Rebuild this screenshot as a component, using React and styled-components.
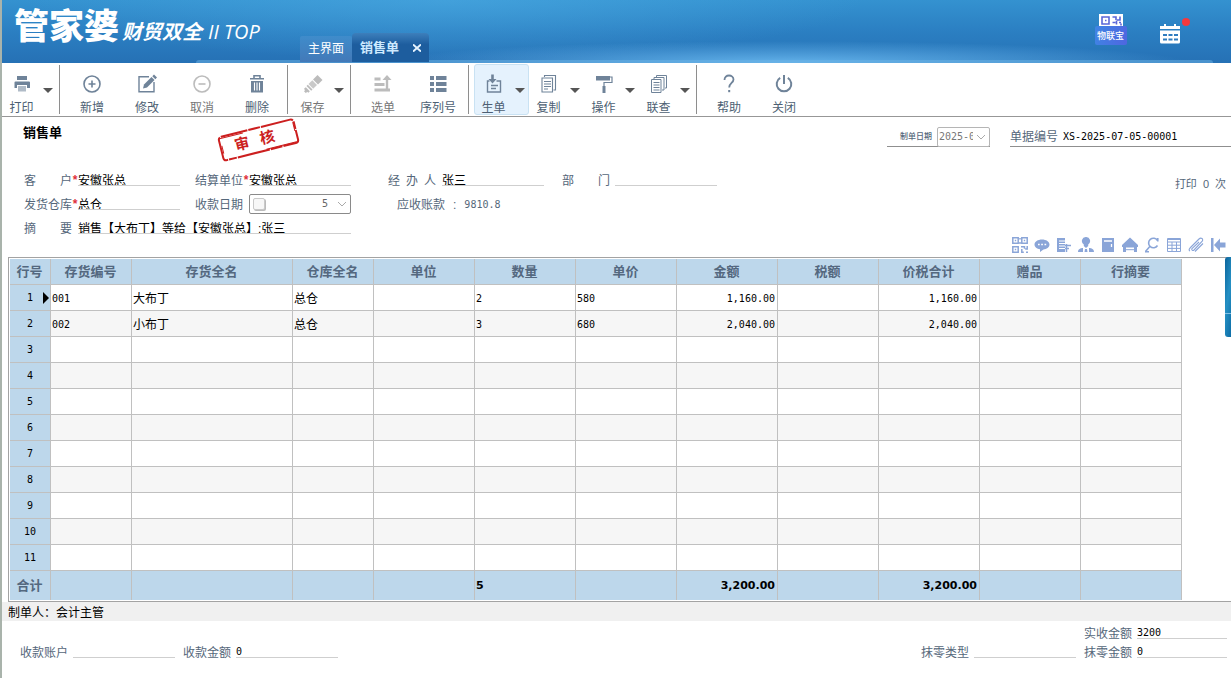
import React from "react";
import styled, { createGlobalStyle, css } from "styled-components";

const CJK = `"Liberation Sans", "Noto Sans CJK SC", sans-serif`;
const MONO = `"DejaVu Sans Mono", "Noto Sans CJK SC", monospace`;

const GlobalStyle = createGlobalStyle`
  * {
    box-sizing: border-box;
  }
  body {
    margin: 0;
    background: #fff;
    font-family: ${CJK};
    font-size: 12px;
    line-height: 16px;
    color: #000;
  }
  button, input, select {
    font: inherit;
    color: inherit;
    margin: 0;
    padding: 0;
    border: 0;
    background: none;
    border-radius: 0;
    outline: none;
  }
`;

const Page = styled.div`
  display: flex;
  flex-direction: column;
  min-height: 100vh;
  border-left: 2px solid #a9b3ab;
  overflow: hidden;
`;

// --- Title bar ---

const TopBar = styled.header`
  position: relative;
  display: flex;
  align-items: flex-end;
  height: 63px;
  background:
    radial-gradient(ellipse 400px 22px at 64% 100%, rgba(105, 185, 240, 0.9), transparent),
    radial-gradient(ellipse 420px 60px at 36% 0, rgba(80, 175, 230, 0.5), transparent),
    linear-gradient(#3492d0, #2b7fc2 50%, #2671b5);
`;

const Shine = styled.div`
  position: absolute;
  left: 194px;
  right: 18px;
  bottom: 0;
  height: 3px;
  background: rgba(110, 180, 230, 0.5);
  border-radius: 12px 12px 0 0;
`;

const Brand = styled.div`
  display: flex;
  align-items: baseline;
  align-self: flex-start;
  width: 298px;
  padding: 3px 0 0 12px;
  color: #fff;
  line-height: 48px;
  white-space: nowrap;
`;

const BrandName = styled.span`
  font-size: 35px;
  font-weight: 900;
`;

const BrandSub = styled.span`
  margin-left: 3px;
  font-size: 20px;
  font-weight: 700;
  font-style: italic;
`;

const BrandEdition = styled.span`
  margin-left: 6px;
  font-family: "Open Sans", sans-serif;
  font-size: 20px;
  font-style: italic;
`;

const Tabs = styled.nav`
  position: relative;
  display: flex;
  align-items: flex-end;
  height: 100%;
  padding-bottom: 1px;
`;

const Tab = styled.button`
  display: flex;
  align-items: center;
  gap: 14px;
  height: 26px;
  padding: 0 8px;
  border-radius: 2px 2px 0 0;
  background: linear-gradient(#3f8ccb, #4379b8);
  color: #fff;
  ${(p) =>
    p.$active &&
    css`
      height: 29px;
      border-radius: 4px 4px 0 0;
      background: linear-gradient(#3d7fbb, #1d5d9e 40%);
      color: #cdeaff;
      font-size: 13px;
      font-weight: 700;
    `}
`;

const TopActions = styled.div`
  display: flex;
  align-items: flex-start;
  gap: 32px;
  align-self: flex-start;
  margin-left: auto;
  padding: 14px 40px 0 0;
`;

const IotButton = styled.button`
  display: flex;
  flex-direction: column;
  align-items: center;
  width: 33px;
  color: #fff;
`;

const IotLabel = styled.span`
  width: 32px;
  height: 19px;
  border-radius: 2px;
  background: linear-gradient(100deg, #3f84e4, #4f66e0);
  font-size: 9px;
  font-weight: 500;
  line-height: 20px;
  text-align: center;
`;

// --- Toolbar ---

const Toolbar = styled.div`
  display: flex;
  height: 54px;
  padding: 1px 0;
  border-bottom: 1px solid #979797;
`;

const ToolButton = styled.button`
  display: grid;
  grid-template-columns: ${(p) => (p.$menu ? "38px 14px" : "1fr")};
  align-items: center;
  width: 55px;
  border: 1px solid ${(p) => (p.$active ? "#c9e2f3" : "transparent")};
  border-radius: 3px;
  background: ${(p) => (p.$active ? "#e5f2fd" : "none")};
  color: ${(p) => (p.disabled ? "#777" : "#4d5f73")};
`;

const ToolFace = styled.span`
  display: flex;
  flex-direction: column;
  align-items: center;
  gap: 5px;
  padding: 8px 1px 0 0;
  white-space: nowrap;

  svg {
    color: ${(p) => (p.$disabled ? "#bcbcbc" : "#6f8399")};
  }
`;

const Caret = styled.span`
  justify-self: center;
  border: 5px solid transparent;
  border-top-color: #555;
  border-bottom: 0;
`;

const Divider = styled.span`
  width: 1px;
  margin: 1px 5px 1px 2px;
  background: #8e8e8e;
`;

// --- Document head ---

const DocHead = styled.div`
  display: flex;
  align-items: flex-start;
  height: 51px;
`;

const DocTitle = styled.h1`
  width: 214px;
  margin: 0;
  padding: 8px 0 0 21px;
  font-size: 13px;
  line-height: 16px;
`;

const DocMeta = styled.div`
  display: flex;
  gap: 20px;
  margin-left: auto;
  padding-top: 10px;
`;

const MetaField = styled.label`
  display: flex;
  align-items: center;
  height: 20px;
  border-bottom: 1px solid #8f8f8f;
  color: #55677a;
`;

const TinyLabel = styled.span`
  width: 50px;
  padding-right: 5px;
  font-size: 8px;
  font-weight: 500;
  text-align: right;
`;

const DateBox = styled.span`
  display: flex;
  align-items: center;
  width: 53px;
  height: 20px;
  padding-left: 1px;
  border: 1px solid #b5b5b5;
  border-radius: 2px;
  background: #fff;
`;

const DateInput = styled.input`
  width: 34px;
  height: 16px;
  font-family: ${MONO};
  font-size: 10px;
  color: #777;
`;

const CodeInput = styled.input`
  width: 168px;
  height: 16px;
  margin-left: 5px;
  font-family: ${MONO};
  font-size: 10px;
  color: #000;
`;

const FormArea = styled.div`
  display: flex;
  justify-content: space-between;
  height: 89px;
`;

const Fields = styled.div`
  display: grid;
  grid-template-columns: 171px 193px 174px 155px;
  grid-template-rows: repeat(3, 24px);
  padding-left: 22px;
`;

const Field = styled.label`
  display: flex;
  align-items: center;
  grid-column: span ${(p) => p.$span || 1};
  color: #55677a;
  white-space: nowrap;
`;

const FieldName = styled.span`
  width: 48px;
  padding-top: 2px;
  text-align-last: justify;
`;

const Mark = styled.span`
  width: 6px;
  color: #e0303a;
  font-weight: 700;
  text-align: center;
`;

const LineInput = styled.input`
  width: ${(p) => p.$width || 102}px;
  height: 12px;
  border-bottom: 1px solid #cfcfcf;
  font-family: ${(p) => (p.$num ? MONO : CJK)};
  font-size: ${(p) => (p.$num ? 10 : 12)}px;
  line-height: 11px;
  color: #000;
`;

const TermBox = styled.span`
  display: flex;
  align-items: center;
  width: 102px;
  height: 20px;
  margin-left: 6px;
  padding-left: 3px;
  border: 1px solid #8a8a8a;
  border-radius: 2px;
  background: #fff;
`;

const TermCheck = styled.input`
  appearance: none;
  width: 12px;
  height: 12px;
  border: 1px solid #c9c9c9;
  border-radius: 2px;
  background: #f7f7f7;
  box-shadow: 1px 1px 0 #bbb;
`;

const TermInput = styled.input`
  flex: 1;
  min-width: 0;
  height: 16px;
  padding-right: 6px;
  font-family: ${MONO};
  font-size: 10px;
  color: #666;
  text-align: right;
`;

const DropButton = styled.button`
  display: flex;
  justify-content: center;
  width: 16px;
`;

const Receivable = styled.output`
  display: flex;
  align-items: center;
  gap: 8px;
  padding: 2px 0 0 9px;
  color: #55677a;
`;

const Num = styled.span`
  font-family: ${MONO};
  font-size: 10px;
`;

const FormSide = styled.div`
  display: flex;
  flex-direction: column;
  justify-content: space-between;
  align-items: flex-end;
  padding: 8px 5px 4px 0;
`;

const PrintCount = styled.span`
  display: flex;
  gap: 6px;
  color: #55677a;
  font-size: 11px;
`;

const IconRow = styled.div`
  display: flex;
  gap: 6px;
  color: #8aa5d8;
`;

const IconButton = styled.button`
  display: flex;
  width: 16px;
  height: 16px;
`;

// --- Grid ---

const GridFrame = styled.div`
  position: relative;
  margin-left: 6px;
  padding: 1px 0 1px 1px;
  border: 1px solid #a3a3a3;
  border-right: 0;
`;

const Sheet = styled.table`
  width: 1172px;
  table-layout: fixed;
  border-collapse: separate;
  border-spacing: 0;

  th, td {
    height: 26px;
    padding: 0 2px 0 1px;
    border-right: 1px solid #c0c0c0;
    border-bottom: 1px solid #c0c0c0;
    overflow: hidden;
    white-space: nowrap;
  }

  thead th, tfoot th, tfoot td {
    background: #bdd7eb;
    color: #54687f;
    font-size: 13px;
    font-weight: 700;
  }

  tbody td {
    padding-top: 2px;
  }

  tbody th {
    padding: 1px 0 0;
    background: #bdd7eb;
    font-weight: 400;
  }

  tbody tr:nth-child(even) td {
    background: #f6f6f6;
  }

  tfoot th, tfoot td {
    height: 29px;
    border-bottom: 0;
  }
`;

const Cell = styled.td`
  text-align: ${(p) => (p.$right ? "right" : "left")};
  font-family: ${(p) => (p.$num ? MONO : CJK)};
  font-size: ${(p) => (p.$num ? 10 : 12)}px;
`;

const TotalCell = styled.td`
  ${Sheet} tfoot & {
    color: #000;
    font-family: "DejaVu Sans", sans-serif;
    font-size: 11px;
    text-align: ${(p) => (p.$right ? "right" : "left")};
  }
`;

const RowHead = styled.div`
  display: grid;
  grid-template-columns: 1fr 16px 1fr;
  align-items: center;
  font-family: ${MONO};
  font-size: 10px;
`;

const Pointer = styled.span`
  justify-self: end;
  margin-right: 1px;
  border: 6px solid transparent;
  border-left-color: #000;
  border-right: 0;
`;

const SideTab = styled.button`
  position: absolute;
  top: -1px;
  right: 0;
  width: 6px;
  height: 80px;
  border-radius: 3px 0 0 3px;
  background:
    linear-gradient(#7fc0e6, #7fc0e6) 0 56px / 100% 1px no-repeat,
    linear-gradient(100deg, #0b649c, #2590c4 50%, #0d6da6);
`;

// --- Footer ---

const StatusBar = styled.div`
  height: 19px;
  padding: 3px 6px 0;
  background: #f0f0f0;
  line-height: 16px;
`;

const Footer = styled.footer`
  display: flex;
  align-items: flex-end;
  gap: 8px;
  padding: 2px 4px 0 18px;
`;

const FootField = styled.label`
  display: flex;
  align-items: center;
  gap: 5px;
  height: 19px;
  color: #55677a;
  white-space: nowrap;
`;

const FootName = styled.span`
  padding-top: 2px;
`;

const FootRight = styled.div`
  display: flex;
  align-items: flex-end;
  gap: 8px;
  margin-left: auto;
`;

// --- Icons ---

function Svg({ size = 22, box = 22, children }) {
  return (
    <svg
      width={size}
      height={size}
      viewBox={`0 0 ${box} ${box}`}
      fill="none"
      stroke="currentColor"
      strokeWidth="1.6"
      aria-hidden="true"
    >
      {children}
    </svg>
  );
}

const icons = {
  print: (
    <Svg>
      <g fill="currentColor" stroke="none">
        <path d="M6 3h10v4H6zM4 8.500h14a1 1 0 0 1 1 1V15h-3v-3H6v3H3.500V9.500a1 1 0 0 1 1-1z" />
        <path d="M7 13h8v5.500H7z" opacity="0.55" />
      </g>
    </Svg>
  ),
  add: (
    <Svg>
      <circle cx="11" cy="11" r="8" />
      <path d="M11 7.500v7M7.500 11h7" />
    </Svg>
  ),
  edit: (
    <Svg>
      <path d="M13 3.800H3v15h15V9" strokeWidth="1.400" />
      <path d="M7 15.500l1-4 7.500-7.500 3 3-7.500 7.500z" fill="currentColor" stroke="none" />
      <path d="M16.300 3.200l1.700-1.700 3 3-1.700 1.700z" fill="currentColor" stroke="none" />
    </Svg>
  ),
  cancel: (
    <Svg>
      <circle cx="11" cy="11" r="8" />
      <path d="M7.500 11h7" />
    </Svg>
  ),
  remove: (
    <Svg>
      <path d="M4 5.800h14M8 5.500V2.800h6v2.700" />
      <path d="M5 8h12v11.500H5z" fill="currentColor" stroke="none" />
      <path d="M8.500 9.500v8M11 9.500v8M13.500 9.500v8" stroke="#fff" strokeWidth="1.100" />
    </Svg>
  ),
  save: (
    <Svg>
      <g fill="currentColor" stroke="none">
        <path d="M15.500 2l5 5-4.500 4.500-5-5z" />
        <path d="M10.300 7.300l4.700 4.700-3.800 3.800-4.700-4.700z" opacity="0.800" />
        <path d="M5.800 11.800l4.700 4.700-1.300 1.300-4.700-4.700zM3.800 14.200l4 4-1.300 1.500-1.500-1-1 1.500-2-2 1-1-1-1.500z" />
      </g>
    </Svg>
  ),
  pick: (
    <Svg>
      <path d="M2.500 6h6M2.500 11.500h10M2.500 17h15.500" strokeWidth="3" />
      <path d="M15 18V6" strokeWidth="2.400" />
      <path d="M10.500 7L15 2l4.500 5z" fill="currentColor" stroke="none" />
    </Svg>
  ),
  serial: (
    <Svg>
      <path d="M3 5h4M3 11h4M3 17h4M9 5h10.500M9 11h10.500M9 17h10.500" strokeWidth="4" />
    </Svg>
  ),
  create: (
    <Svg>
      <path d="M6.500 8H4.500v11h13V8H13.500M8 12.500h7M8 15.500h5" strokeWidth="1.400" />
      <path d="M9.500 1.500v6" strokeWidth="2.600" />
      <path d="M5.500 6h8L9.500 10.500z" fill="currentColor" stroke="none" />
    </Svg>
  ),
  copy: (
    <Svg>
      <path d="M6.500 4V2.500h11V17H15.500M4 5h10.500v14H4zM6 8.500h7M6 11h7M6 13.500h7M6 16h4" strokeWidth="1.100" />
    </Svg>
  ),
  operate: (
    <Svg>
      <path d="M3 3h14v4.500H3z" fill="currentColor" stroke="none" />
      <path d="M17 4h2v5.500h-8V13" strokeWidth="1.200" />
      <path d="M11 13v7" strokeWidth="3" />
    </Svg>
  ),
  trace: (
    <Svg>
      <path d="M8.500 4V2.500h10V15H17M6 6V4.500h10V17h-2M3.500 6.500H13v13H3.500zM5.500 9.500h6M5.500 12h6M5.500 14.500h6M5.500 17h6" strokeWidth="1" />
    </Svg>
  ),
  help: (
    <Svg>
      <path d="M6.500 7c0-3 2-4.500 4.500-4.500s4.500 1.700 4.500 4c0 3.500-4.300 3.500-4.300 8" strokeWidth="1.800" />
      <path d="M10.200 17h2v2.200h-2z" fill="currentColor" stroke="none" />
    </Svg>
  ),
  close: (
    <Svg>
      <path d="M7.200 4.800a7.300 7.300 0 1 0 7.600 0M11 2v9" strokeWidth="2" />
    </Svg>
  ),
};

const smallIcons = [
  ["二维码", <path d="M.800.800h5.400v5.400H.800zM9.800.800h5.400v5.400H9.800zM.800 9.800h5.400v5.400H.800zM2.800 3.500h1.400M11.800 3.500h1.400M2.800 12.500h1.400M9 9.800h3.500v2M15.200 9v3h-2M9.800 12v3.200h2M14 15.200h2M8 1v1.500M8 5v2" strokeWidth="1.500" />],
  ["消息", <g><path d="M8 2.500c4.200 0 7.500 2.200 7.500 5s-3 4.800-6 5L6 15v-2.700C3 12 .5 10 .5 7.500c0-2.800 3.300-5 7.500-5z" fill="currentColor" stroke="none" /><path d="M4 7.500h1.700M7.200 7.500h1.700M10.500 7.500h1.700" stroke="#fff" /></g>],
  ["单位", <g><path d="M1 1h8v14H1z" fill="currentColor" stroke="none" /><path d="M3 4h6M3 6.500h6M3 9h6M3 11.500h6" stroke="#fff" strokeWidth="1" /><path d="M9 8.500h6M9 11.500h4M10.500 7v8" strokeWidth="1.500" /></g>],
  ["人员", <path d="M8 0a4 4 0 0 1 2.200 7.400v1.600L8 11 5.800 9V7.400A4 4 0 0 1 8 0zM0 15c0-3 2.500-4 5-4v4zM16 15c0-3-2.500-4-5-4v4zM7 12h2l.500 3h-3z" fill="currentColor" stroke="none" />],
  ["仓库门", <g><path d="M2 1h12v14H2z" fill="currentColor" stroke="none" /><path d="M4 4h8M11.500 7v3" stroke="#fff" strokeWidth="1.300" /></g>],
  ["首页", <g><path d="M8 .5L16 8v2h-1v5H1v-5H0V8z" fill="currentColor" stroke="none" /><path d="M4 10.500h8v4.500H4z" fill="#fff" stroke="none" /><path d="M4 12.700h8" strokeWidth="1" /></g>],
  ["查找", <path d="M13.500 3.500A4.800 4.800 0 1 0 13.500 8.500M5.800 9.500L1.500 14.500M13.800 1v3.500M1 14.700h4" strokeWidth="1.600" />],
  ["计算器", <path d="M1.500 1.500h13v13h-13zM1.500 5h13M1.500 8.200h13M1.500 11.400h13M6 5v9.500M10.500 5v9.500M1.500 2.500h13" strokeWidth="1" />],
  ["附件", <path d="M2 14c-2-1 0-3 1-4L11 2c2-2 5 0 3 2.500L6 13c-1 1-3 0-2-1.500L11 5M7 14.500l8-8" strokeWidth="1.100" />],
  ["收起", <path d="M1 1h2.500v14H1zM4 8l6-6.500V5.500h5.500v5H10v4z" fill="currentColor" stroke="none" />],
];

function Chevron() {
  return (
    <svg width="10" height="6" viewBox="0 0 10 6" fill="none" stroke="#aaa" aria-hidden="true">
      <path d="M1 1l4 4 4-4" />
    </svg>
  );
}

function QrMark() {
  return (
    <svg width="24" height="12" viewBox="0 0 24 12" aria-hidden="true">
      <path d="M0 0h24v12H0z" fill="#fff" />
      <path
        d="M3 3h7v7H3zM6 6.500h1.500M13.500 3h3.500v3M21 2.500v3.500h-3M13.500 8.500h3M17.500 6.500v4M20 8.500h2M22 9.500v2"
        fill="none"
        stroke="#5a66d8"
        strokeWidth="1.600"
      />
    </svg>
  );
}

function CalendarMark() {
  return (
    <svg width="32" height="30" viewBox="0 0 32 30" aria-hidden="true">
      <path d="M1 12h20v3H1zM1 16.500h20V28a1.500 1.500 0 0 1-1.500 1.500h-17A1.500 1.500 0 0 1 1 28zM5 10h2v3H5zM15 10h2v3h-2z" fill="#fff" />
      <path d="M4 20h4v2H4zM9.500 20h4v2h-4zM15 20h4v2h-4zM4 24.500h4v2H4zM9.500 24.500h4v2h-4zM15 24.500h4v2h-4z" fill="#2f7cc0" />
      <circle cx="27" cy="8" r="4" fill="#f5383c" />
    </svg>
  );
}

function Stamp() {
  return (
    <svg width="84" height="46" viewBox="0 0 84 46" role="img" aria-label="审核">
      <g transform="rotate(-14 42 23)" stroke="#cc1f1f" fill="none">
        <rect x="4" y="11" width="77" height="24" rx="3" strokeWidth="2" strokeDasharray="27 1 12 1 33 1 8 1" />
        <path d="M5 12.500h24M48 34h31M5.500 20v8M80 14v9" strokeWidth="1" />
        <g
          fill="#cc1f1f"
          stroke="none"
          fontFamily="Noto Sans CJK SC, sans-serif"
          fontSize="15"
          fontWeight="700"
        >
          <text x="18" y="28">审</text>
          <text x="44" y="28">核</text>
        </g>
      </g>
    </svg>
  );
}

// --- Data ---

const tools = [
  { icon: "print", label: "打印", menu: true },
  null,
  { icon: "add", label: "新增" },
  { icon: "edit", label: "修改" },
  { icon: "cancel", label: "取消", disabled: true },
  { icon: "remove", label: "删除" },
  null,
  { icon: "save", label: "保存", menu: true, disabled: true },
  null,
  { icon: "pick", label: "选单", disabled: true },
  { icon: "serial", label: "序列号" },
  null,
  { icon: "create", label: "生单", menu: true, active: true },
  { icon: "copy", label: "复制", menu: true },
  { icon: "operate", label: "操作", menu: true },
  { icon: "trace", label: "联查", menu: true },
  null,
  { icon: "help", label: "帮助" },
  { icon: "close", label: "关闭" },
];

const columns = [
  { key: "code", title: "存货编号", width: 81, num: true },
  { key: "name", title: "存货全名", width: 161 },
  { key: "store", title: "仓库全名", width: 81 },
  { key: "unit", title: "单位", width: 101 },
  { key: "qty", title: "数量", width: 101, num: true },
  { key: "price", title: "单价", width: 101, num: true },
  { key: "amount", title: "金额", width: 101, num: true, right: true },
  { key: "tax", title: "税额", width: 101, num: true, right: true },
  { key: "sum", title: "价税合计", width: 101, num: true, right: true },
  { key: "gift", title: "赠品", width: 101 },
  { key: "note", title: "行摘要", width: 101 },
];

const items = [
  { code: "001", name: "大布丁", store: "总仓", qty: "2", price: "580", amount: "1,160.00", sum: "1,160.00" },
  { code: "002", name: "小布丁", store: "总仓", qty: "3", price: "680", amount: "2,040.00", sum: "2,040.00" },
];

const rows = Array.from({ length: 11 }, (_, i) => items[i] || {});
const totals = { qty: "5", amount: "3,200.00", sum: "3,200.00" };

// --- Main Component ---

function App() {
  return (
    <Page>
      <GlobalStyle />
      <TopBar>
        <Shine />
        <Brand>
          <BrandName>管家婆</BrandName>
          <BrandSub>财贸双全</BrandSub>
          <BrandEdition>II TOP</BrandEdition>
        </Brand>
        <Tabs>
          <Tab>主界面</Tab>
          <Tab $active>
            销售单
            <svg width="8" height="8" viewBox="0 0 8 8" stroke="#e6f4ff" strokeWidth="2" aria-hidden="true">
              <path d="M0 0.500l8 7M8 0.500l-8 7" />
            </svg>
          </Tab>
        </Tabs>
        <TopActions>
          <IotButton>
            <QrMark />
            <IotLabel>物联宝</IotLabel>
          </IotButton>
          <button aria-label="日历">
            <CalendarMark />
          </button>
        </TopActions>
      </TopBar>

      <Toolbar>
        {tools.map((tool, index) =>
          tool ? (
            <ToolButton
              key={tool.icon}
              $menu={tool.menu}
              $active={tool.active}
              disabled={tool.disabled}
            >
              <ToolFace $disabled={tool.disabled}>
                {icons[tool.icon]}
                {tool.label}
              </ToolFace>
              {tool.menu && <Caret />}
            </ToolButton>
          ) : (
            <Divider key={index} />
          ),
        )}
      </Toolbar>

      <DocHead>
        <DocTitle>销售单</DocTitle>
        <Stamp />
        <DocMeta>
          <MetaField>
            <TinyLabel>制单日期</TinyLabel>
            <DateBox>
              <DateInput defaultValue="2025-07-05" />
              <DropButton aria-label="选择日期">
                <Chevron />
              </DropButton>
            </DateBox>
          </MetaField>
          <MetaField>
            单据编号
            <CodeInput defaultValue="XS-2025-07-05-00001" />
          </MetaField>
        </DocMeta>
      </DocHead>

      <FormArea>
        <Fields>
          <Field>
            <FieldName>客　　户</FieldName>
            <Mark>*</Mark>
            <LineInput defaultValue="安徽张总" />
          </Field>
          <Field>
            <FieldName>结算单位</FieldName>
            <Mark>*</Mark>
            <LineInput defaultValue="安徽张总" />
          </Field>
          <Field>
            <FieldName>经 办 人</FieldName>
            <Mark />
            <LineInput defaultValue="张三" />
          </Field>
          <Field>
            <FieldName>部　　门</FieldName>
            <Mark />
            <LineInput />
          </Field>
          <Field>
            <FieldName>发货仓库</FieldName>
            <Mark>*</Mark>
            <LineInput defaultValue="总仓" />
          </Field>
          <Field as="div">
            <FieldName as="label" htmlFor="term">
              收款日期
            </FieldName>
            <TermBox>
              <TermCheck type="checkbox" aria-label="启用收款日期" />
              <TermInput id="term" defaultValue="5" />
              <DropButton aria-label="选择收款日期">
                <Chevron />
              </DropButton>
            </TermBox>
          </Field>
          <Receivable>
            应收账款
            <span>:</span>
            <Num>9810.8</Num>
          </Receivable>
          <span />
          <Field $span={2}>
            <FieldName>摘　　要</FieldName>
            <Mark />
            <LineInput $width={273} defaultValue="销售【大布丁】等给【安徽张总】:张三" />
          </Field>
        </Fields>
        <FormSide>
          <PrintCount>
            <span>打印</span>
            <span>0</span>
            <span>次</span>
          </PrintCount>
          <IconRow>
            {smallIcons.map(([label, shape]) => (
              <IconButton key={label} aria-label={label}>
                <Svg size={16} box={16}>
                  {shape}
                </Svg>
              </IconButton>
            ))}
          </IconRow>
        </FormSide>
      </FormArea>

      <GridFrame>
        <Sheet>
          <colgroup>
            <col width={41} />
            {columns.map((col) => (
              <col key={col.key} width={col.width} />
            ))}
          </colgroup>
          <thead>
            <tr>
              <th>行号</th>
              {columns.map((col) => (
                <th key={col.key}>{col.title}</th>
              ))}
            </tr>
          </thead>
          <tbody>
            {rows.map((row, index) => (
              <tr key={index}>
                <th>
                  <RowHead>
                    <span />
                    {index + 1}
                    {index === 0 && <Pointer />}
                  </RowHead>
                </th>
                {columns.map((col) => (
                  <Cell key={col.key} $num={col.num} $right={col.right}>
                    {row[col.key]}
                  </Cell>
                ))}
              </tr>
            ))}
          </tbody>
          <tfoot>
            <tr>
              <th>合计</th>
              {columns.map((col) => (
                <TotalCell key={col.key} $right={col.right}>
                  {totals[col.key]}
                </TotalCell>
              ))}
            </tr>
          </tfoot>
        </Sheet>
        <SideTab aria-label="展开侧栏" />
      </GridFrame>

      <StatusBar>制单人：会计主管</StatusBar>

      <Footer>
        <FootField>
          <FootName>收款账户</FootName>
          <LineInput />
        </FootField>
        <FootField>
          <FootName>收款金额</FootName>
          <LineInput $num defaultValue="0" />
        </FootField>
        <FootRight>
          <FootField>
            <FootName>抹零类型</FootName>
            <LineInput />
          </FootField>
          <div>
            <FootField>
              <FootName>实收金额</FootName>
              <LineInput $num $width={90} defaultValue="3200" />
            </FootField>
            <FootField>
              <FootName>抹零金额</FootName>
              <LineInput $num $width={90} defaultValue="0" />
            </FootField>
          </div>
        </FootRight>
      </Footer>
    </Page>
  );
}

export default App;
